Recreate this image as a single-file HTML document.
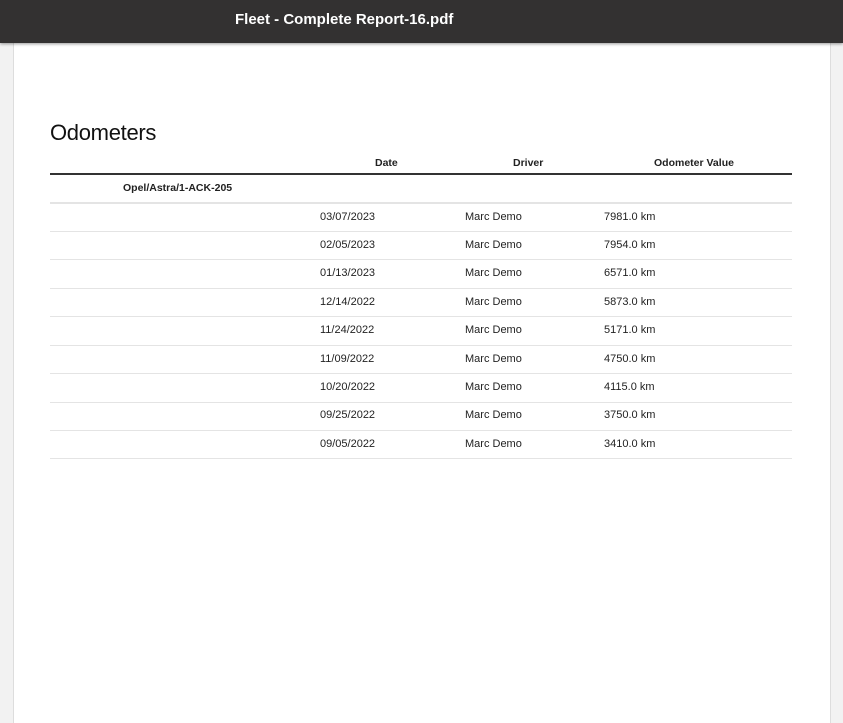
<!DOCTYPE html>
<html><head><style>
body{margin:0;width:843px;height:713px;background:#f2f2f2;font-family:"Liberation Sans",sans-serif;position:relative;overflow:hidden}
.bar{position:absolute;left:0;top:0;width:843px;height:43px;background:#333131;box-shadow:0 1px 3px rgba(0,0,0,.4);z-index:2}
.bar span{position:absolute;left:235px;top:11px;color:#fff;font-weight:bold;font-size:15px}
.page{position:absolute;left:13px;top:43px;width:816px;height:680px;background:#fff;border-left:1px solid #ddd;border-right:1px solid #ddd}
.t{position:absolute;font-size:11px;color:#222;white-space:nowrap}
h1{position:absolute;left:50px;top:120px;margin:0;font-weight:normal;font-size:22px;color:#111;letter-spacing:-0.3px}
.line{position:absolute;left:50px;width:742px;height:1px;background:#e4e4e4}
</style></head><body>
<div class="bar"><span>Fleet - Complete Report-16.pdf</span></div>
<div class="page"></div>
<h1>Odometers</h1>
<div class="t" style="left:375px;top:157px;font-weight:bold;font-size:10.5px">Date</div>
<div class="t" style="left:513px;top:157px;font-weight:bold;font-size:10.5px">Driver</div>
<div class="t" style="left:654px;top:157px;font-weight:bold;font-size:10.5px">Odometer Value</div>
<div class="line" style="top:173px;height:2px;background:#333"></div>
<div class="t" style="left:123px;top:182px;font-weight:bold;font-size:10.5px">Opel/Astra/1-ACK-205</div>
<div class="line" style="top:202px;height:2px"></div>
<div class="t" style="left:320px;top:211px">03/07/2023</div><div class="t" style="left:465px;top:211px">Marc Demo</div><div class="t" style="left:604px;top:211px">7981.0 km</div>
<div class="line" style="top:231px"></div>
<div class="t" style="left:320px;top:239px">02/05/2023</div><div class="t" style="left:465px;top:239px">Marc Demo</div><div class="t" style="left:604px;top:239px">7954.0 km</div>
<div class="line" style="top:259px"></div>
<div class="t" style="left:320px;top:267px">01/13/2023</div><div class="t" style="left:465px;top:267px">Marc Demo</div><div class="t" style="left:604px;top:267px">6571.0 km</div>
<div class="line" style="top:288px"></div>
<div class="t" style="left:320px;top:296px">12/14/2022</div><div class="t" style="left:465px;top:296px">Marc Demo</div><div class="t" style="left:604px;top:296px">5873.0 km</div>
<div class="line" style="top:316px"></div>
<div class="t" style="left:320px;top:324px">11/24/2022</div><div class="t" style="left:465px;top:324px">Marc Demo</div><div class="t" style="left:604px;top:324px">5171.0 km</div>
<div class="line" style="top:345px"></div>
<div class="t" style="left:320px;top:353px">11/09/2022</div><div class="t" style="left:465px;top:353px">Marc Demo</div><div class="t" style="left:604px;top:353px">4750.0 km</div>
<div class="line" style="top:373px"></div>
<div class="t" style="left:320px;top:381px">10/20/2022</div><div class="t" style="left:465px;top:381px">Marc Demo</div><div class="t" style="left:604px;top:381px">4115.0 km</div>
<div class="line" style="top:402px"></div>
<div class="t" style="left:320px;top:409px">09/25/2022</div><div class="t" style="left:465px;top:409px">Marc Demo</div><div class="t" style="left:604px;top:409px">3750.0 km</div>
<div class="line" style="top:430px"></div>
<div class="t" style="left:320px;top:438px">09/05/2022</div><div class="t" style="left:465px;top:438px">Marc Demo</div><div class="t" style="left:604px;top:438px">3410.0 km</div>
<div class="line" style="top:458px"></div>
</body></html>
